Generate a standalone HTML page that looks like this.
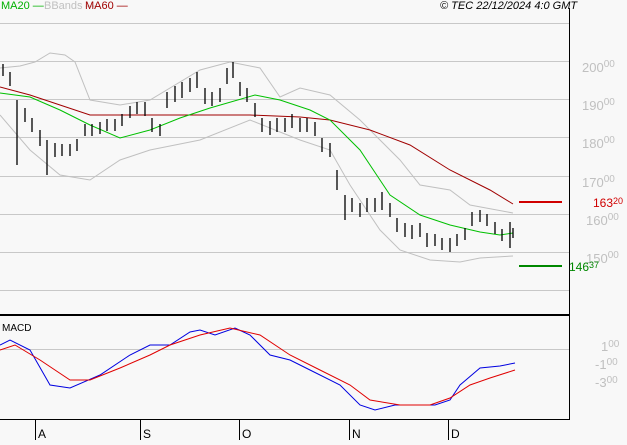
<!DOCTYPE html><html><head><style>
body{margin:0;background:#f8f8f8;width:627px;height:440px;overflow:hidden;font-family:"Liberation Sans",sans-serif}
svg text{font-family:"Liberation Sans",sans-serif}
</style></head><body>
<svg width="627" height="440" xmlns="http://www.w3.org/2000/svg">
<rect width="627" height="440" fill="#f8f8f8"/>
<g stroke="#c8c8c8" stroke-width="1">
<line x1="0" y1="23.5" x2="569" y2="23.5"/><line x1="0" y1="61.5" x2="569" y2="61.5"/><line x1="0" y1="99.5" x2="569" y2="99.5"/><line x1="0" y1="137.5" x2="569" y2="137.5"/><line x1="0" y1="176.5" x2="569" y2="176.5"/><line x1="0" y1="214.5" x2="569" y2="214.5"/><line x1="0" y1="252.5" x2="569" y2="252.5"/><line x1="0" y1="290.5" x2="569" y2="290.5"/><line x1="0" y1="349.5" x2="569" y2="349.5"/>
</g>
<line x1="569.5" y1="8" x2="569.5" y2="420" stroke="#000"/>
<line x1="0" y1="315" x2="570" y2="315" stroke="#000" stroke-width="2"/>
<line x1="0" y1="419.5" x2="570" y2="419.5" stroke="#000"/>
<g font-size="13" fill="#c0c0c0">
<text x="582" y="72">200<tspan font-size="10" dy="-5">00</tspan></text>
<text x="582" y="110">190<tspan font-size="10" dy="-5">00</tspan></text>
<text x="582" y="148">180<tspan font-size="10" dy="-5">00</tspan></text>
<text x="582" y="187">170<tspan font-size="10" dy="-5">00</tspan></text>
<text x="586" y="225">160<tspan font-size="10" dy="-5">00</tspan></text>
<text x="586" y="263">150<tspan font-size="10" dy="-5">00</tspan></text>
<text x="601" y="351">1<tspan font-size="10" dy="-4">00</tspan></text>
<text x="595" y="369">-1<tspan font-size="10" dy="-4">00</tspan></text>
<text x="595" y="387">-3<tspan font-size="10" dy="-4">00</tspan></text>
</g>
<line x1="519" y1="202" x2="562" y2="202" stroke="#d00000" stroke-width="2"/>
<text x="593" y="207" font-size="12" fill="#d00000">163<tspan font-size="9" dy="-3">20</tspan></text>
<line x1="519" y1="266" x2="562" y2="266" stroke="#008800" stroke-width="2"/>
<text x="569" y="271" font-size="12" fill="#008800">146<tspan font-size="9" dy="-3">37</tspan></text>
<text x="1" y="9" font-size="11" fill="#00b000">MA20 —</text>
<text x="44" y="9" font-size="11" fill="#c0c0c0">BBands —</text>
<text x="85" y="9" font-size="11" fill="#a00000">MA60 —</text>
<text x="440" y="9" font-size="11" font-style="italic" fill="#000">© TEC 22/12/2024 4:0 GMT</text>
<text x="2" y="331" font-size="10" fill="#000">MACD</text>
<g fill="none" stroke-width="1">
<polyline stroke="#c0c0c0" points="0,68 20,66 35,62 50,53 65,55 75,62 90,100 120,105 150,100 200,70 230,62 260,68 280,97 300,88 330,95 360,120 380,140 400,160 420,185 450,190 470,205 513,213"/>
<polyline stroke="#c0c0c0" points="0,115 30,150 60,175 90,180 120,160 150,150 200,140 250,120 300,140 330,150 350,185 380,230 400,250 430,260 460,262 480,258 513,256"/>
<polyline stroke="#a00000" points="0,87 30,95 60,105 90,115 150,115 250,115 300,117 330,120 370,130 410,145 450,170 490,190 513,204"/>
<polyline stroke="#00c000" points="0,93 30,97 60,110 90,125 120,138 150,130 180,118 210,108 255,95 280,100 310,110 330,120 360,150 390,195 420,215 450,225 480,232 500,235 513,233"/>
<polyline stroke="#0000e0" points="0,345 10,340 30,350 50,385 70,388 100,375 130,355 150,345 170,345 190,332 200,330 215,335 235,328 250,335 270,355 290,360 310,370 340,385 360,405 375,410 395,405 435,405 450,400 460,385 480,368 500,366 515,363"/>
<polyline stroke="#e00000" points="0,350 15,345 40,360 70,380 90,380 120,368 150,355 170,345 200,335 230,328 260,335 290,355 320,370 350,385 370,400 400,405 430,405 450,398 470,385 490,378 515,370"/>
</g>
<path fill="none" stroke="#000" stroke-width="1.3" d="M3 64v12M10 72v14M17 100v65M25 108v14M32 118v14M40 130v16M47 140v35M55 143v14M62 144v12M70 144v12M77 139v12M85 124v12M92 124v12M100 122v12M107 119v12M115 119v12M122 114v12M130 106v12M137 102v12M145 102v14M152 118v14M160 124v12M167 92v16M175 86v16M182 82v16M190 78v14M197 72v16M205 88v16M212 92v14M220 88v14M227 68v16M233 62v16M240 82v14M247 88v14M255 103v14M262 118v14M270 121v14M277 118v14M285 118v14M292 114v14M300 118v14M307 118v14M315 122v14M322 138v14M330 143v14M337 170v20M345 195v25M352 198v14M360 203v14M367 198v14M375 198v14M382 192v18M390 203v14M397 218v14M405 223v14M412 225v14M420 223v14M427 233v14M435 234v12M442 238v12M450 238v14M457 234v12M465 228v12M472 212v14M480 210v12M487 214v12M495 222v12M502 229v12M510 222v26M513 228v10"/>
<g stroke="#000"><line x1="35.5" y1="420" x2="35.5" y2="440"/><line x1="140.5" y1="420" x2="140.5" y2="440"/><line x1="239.5" y1="420" x2="239.5" y2="440"/><line x1="349.5" y1="420" x2="349.5" y2="440"/><line x1="448.5" y1="420" x2="448.5" y2="440"/></g>
<g font-size="12" fill="#000"><text x="38" y="438">A</text><text x="143" y="438">S</text><text x="242" y="438">O</text><text x="352" y="438">N</text><text x="451" y="438">D</text></g>
</svg>
</body></html>
